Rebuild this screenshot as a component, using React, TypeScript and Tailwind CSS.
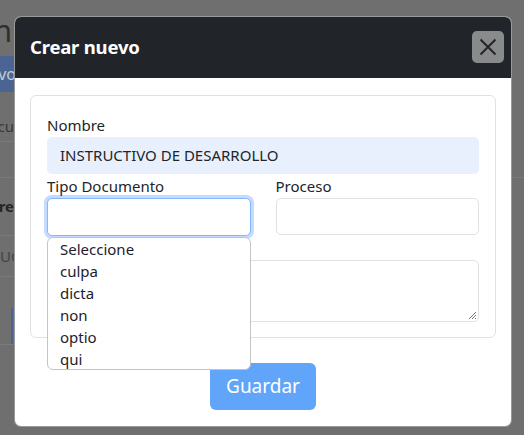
import React from "react";

const font = { fontFamily: '"Noto Sans", "Open Sans", sans-serif' };

export default function App() {
  const options = ["Seleccione", "culpa", "dicta", "non", "optio", "qui"];
  return (
    <div className="relative w-[524px] h-[435px] overflow-hidden bg-[#6f6f6f] text-[#212529]" style={font}>
      {/* background page (already dimmed by the backdrop) */}
      <div className="flex flex-col w-[524px]">
        <div className="h-[54px] pt-[14px] flex justify-end w-[12px] overflow-visible">
          <div className="text-[30px] leading-[34px] text-[#2e2e2e] whitespace-nowrap">Documentación</div>
        </div>
        <div className="mt-[2px] h-[36px] w-[200px] -ml-[186px] bg-[#4a6594] flex items-center justify-end">
          <div className="text-[16px] text-[#c6ccd6] whitespace-nowrap mr-[-2px]">Nuevo</div>
        </div>
        <div className="h-[50px] border-b border-[#7b7b7b] flex items-end justify-end w-[14px] pb-[4px]">
          <div className="text-[15px] text-[#383838] whitespace-nowrap">Docu</div>
        </div>
        <div className="h-[36px] border-b border-[#7b7b7b]"></div>
        <div className="h-[58px] border-b border-[#7b7b7b] flex items-center justify-end w-[14px]">
          <div className="text-[15px] font-bold text-[#262626] whitespace-nowrap">Valore</div>
        </div>
        <div className="h-[41px] border-b border-[#7b7b7b] flex items-center justify-start w-[14px]">
          <div className="text-[15px] text-[#444] whitespace-nowrap">UC</div>
        </div>
        <div className="h-[68px] border-b border-[#7b7b7b] flex items-end justify-end w-[14px]">
          <div className="w-[2px] h-[36px] bg-[#4a6594] mr-[1px]"></div>
        </div>
      </div>

      {/* modal */}
      <div className="absolute left-[14px] top-[16px] w-[498px] h-[411px] bg-white rounded-[7px] overflow-hidden flex flex-col border border-black/40">
        <div className="h-[62px] -mt-px -mx-px bg-[#212529] flex items-center justify-between pl-[16px] pr-[8px]">
          <div className="text-white font-bold text-[18.5px] tracking-[-0.2px]">Crear nuevo</div>
          <div className="w-[32px] h-[32px] rounded-[5px] bg-[#898a8c] flex items-center justify-center">
            <svg width="20" height="20" viewBox="0 0 20 20" fill="none">
              <path d="M2.5 2.5 L17.5 17.5 M17.5 2.5 L2.5 17.5" stroke="#212529" strokeWidth="2" />
            </svg>
          </div>
        </div>
        <div className="flex flex-col px-[15px] pt-[17px]">
          <div className="border border-[#dee2e6] rounded-[6px] px-[16px] pt-[19px] pb-[16px] h-[243px]">
            <div className="text-[15px] leading-[20px] text-[#212529]">Nombre</div>
            <div className="mt-[2px] h-[37px] rounded-[5px] bg-[#e8f0fe] flex items-center px-[13px] text-[15px] text-[#212529]">
              INSTRUCTIVO DE DESARROLLO
            </div>
            <div className="grid grid-cols-2 gap-x-[25px] mt-[2px]">
              <div className="relative">
                <div className="text-[15px] leading-[20px]">Tipo Documento</div>
                <div className="mt-[2px] h-[38px] rounded-[5px] border border-[#86b7fe] ring-[3px] ring-[#0d6efd]/25 bg-white"></div>
                <div className="absolute left-0 top-[61px] w-full h-[133px] bg-white border border-[#c4c4c4] rounded-[6px] z-10 flex flex-col pt-0 pl-[12px]">
                  {options.map((o) => (
                    <div key={o} className="text-[15px] leading-[22px] text-[#1c1c2c]">{o}</div>
                  ))}
                </div>
              </div>
              <div>
                <div className="text-[15px] leading-[20px]">Proceso</div>
                <div className="mt-[2px] h-[37px] rounded-[5px] border border-[#dee2e6] bg-white"></div>
              </div>
            </div>
            <div className="text-[15px] leading-[20px] mt-[4px]">Descripción</div>
            <div className="relative h-[62px] rounded-[5px] border border-[#dee2e6] bg-white">
              <svg className="absolute right-[1px] bottom-[1px]" width="9" height="9" viewBox="0 0 9 9">
                <path d="M8 1 L1 8 M8 4 L4 8 M8 7 L7 8" stroke="#555" strokeWidth="0.8" />
              </svg>
            </div>
          </div>
          <div className="flex justify-center mt-[25px]">
            <div className="w-[106px] h-[47px] rounded-[6px] bg-[#60a5fa] text-white text-[19px] flex items-center justify-center">
              Guardar
            </div>
          </div>
        </div>
      </div>
    </div>
  );
}
